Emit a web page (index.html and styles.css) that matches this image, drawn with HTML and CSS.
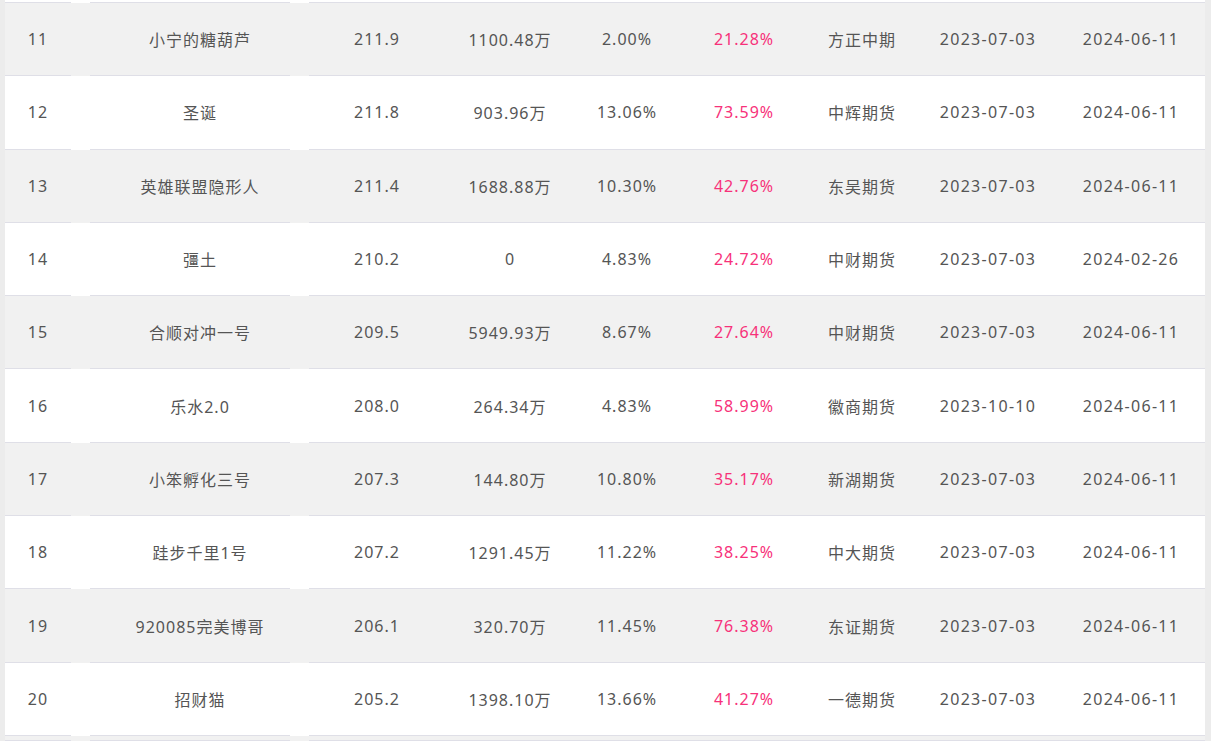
FILE: index.html
```html
<!DOCTYPE html>
<html lang="zh-CN">
<head>
<meta charset="utf-8">
<title>排行榜</title>
<link rel="stylesheet" href="styles.css">
</head>
<body>
<div class="table">
  <div class="row row-stub"></div>
  <div class="row odd"><div class="c">11</div><div class="c">小宁的糖葫芦</div><div class="c">211.9</div><div class="c">1100.48万</div><div class="c">2.00%</div><div class="c pink">21.28%</div><div class="c">方正中期</div><div class="c date">2023-07-03</div><div class="c date">2024-06-11</div></div>
  <div class="row"><div class="c">12</div><div class="c">圣诞</div><div class="c">211.8</div><div class="c">903.96万</div><div class="c">13.06%</div><div class="c pink">73.59%</div><div class="c">中辉期货</div><div class="c date">2023-07-03</div><div class="c date">2024-06-11</div></div>
  <div class="row odd"><div class="c">13</div><div class="c">英雄联盟隐形人</div><div class="c">211.4</div><div class="c">1688.88万</div><div class="c">10.30%</div><div class="c pink">42.76%</div><div class="c">东吴期货</div><div class="c date">2023-07-03</div><div class="c date">2024-06-11</div></div>
  <div class="row"><div class="c">14</div><div class="c">彊土</div><div class="c">210.2</div><div class="c">0</div><div class="c">4.83%</div><div class="c pink">24.72%</div><div class="c">中财期货</div><div class="c date">2023-07-03</div><div class="c date">2024-02-26</div></div>
  <div class="row odd"><div class="c">15</div><div class="c">合顺对冲一号</div><div class="c">209.5</div><div class="c">5949.93万</div><div class="c">8.67%</div><div class="c pink">27.64%</div><div class="c">中财期货</div><div class="c date">2023-07-03</div><div class="c date">2024-06-11</div></div>
  <div class="row"><div class="c">16</div><div class="c">乐水2.0</div><div class="c">208.0</div><div class="c">264.34万</div><div class="c">4.83%</div><div class="c pink">58.99%</div><div class="c">徽商期货</div><div class="c date">2023-10-10</div><div class="c date">2024-06-11</div></div>
  <div class="row odd"><div class="c">17</div><div class="c">小笨孵化三号</div><div class="c">207.3</div><div class="c">144.80万</div><div class="c">10.80%</div><div class="c pink">35.17%</div><div class="c">新湖期货</div><div class="c date">2023-07-03</div><div class="c date">2024-06-11</div></div>
  <div class="row"><div class="c">18</div><div class="c">跬步千里1号</div><div class="c">207.2</div><div class="c">1291.45万</div><div class="c">11.22%</div><div class="c pink">38.25%</div><div class="c">中大期货</div><div class="c date">2023-07-03</div><div class="c date">2024-06-11</div></div>
  <div class="row odd"><div class="c">19</div><div class="c">920085完美博哥</div><div class="c">206.1</div><div class="c">320.70万</div><div class="c">11.45%</div><div class="c pink">76.38%</div><div class="c">东证期货</div><div class="c date">2023-07-03</div><div class="c date">2024-06-11</div></div>
  <div class="row"><div class="c">20</div><div class="c">招财猫</div><div class="c">205.2</div><div class="c">1398.10万</div><div class="c">13.66%</div><div class="c pink">41.27%</div><div class="c">一德期货</div><div class="c date">2023-07-03</div><div class="c date">2024-06-11</div></div>
  <div class="row odd row-tail"></div>
</div>
</body>
</html>
```
FILE: styles.css
```css
html, body {
  margin: 0;
  padding: 0;
  background: #ececec;
  overflow: hidden;
}
body {
  height: 741px;
}
.table {
  margin-left: 5px;
  width: 1200px;
  font-family: "Noto Sans", "Noto Sans CJK SC", sans-serif;
  font-size: 16px;
  letter-spacing: 1px;
  color: #555555;
}
.row {
  display: grid;
  grid-template-columns: 66px 258px 96px 170px 64px 170px 66px 186px 100px 24px;
  height: 73.3px;
  box-sizing: border-box;
  background:
    linear-gradient(to right,
      #dfdfe7 0 66px, transparent 66px 85px,
      #dfdfe7 85px 285px, transparent 285px 304px,
      #dfdfe7 304px) bottom / 100% 1px no-repeat,
    #ffffff;
}
.row.odd {
  background:
    linear-gradient(to right,
      #dfdfe7 0 66px, transparent 66px 85px,
      #dfdfe7 85px 285px, transparent 285px 304px,
      #dfdfe7 304px) bottom / 100% 1px no-repeat,
    #f1f1f1;
}
.row-stub {
  height: 3px;
}
.row-tail {
  height: 5px;
}
.c {
  display: flex;
  justify-content: center;
  align-items: center;
  white-space: nowrap;
  padding-bottom: 1px;
}
.date {
  letter-spacing: 1.3px;
}
.pink {
  color: #f7317a;
}
```
